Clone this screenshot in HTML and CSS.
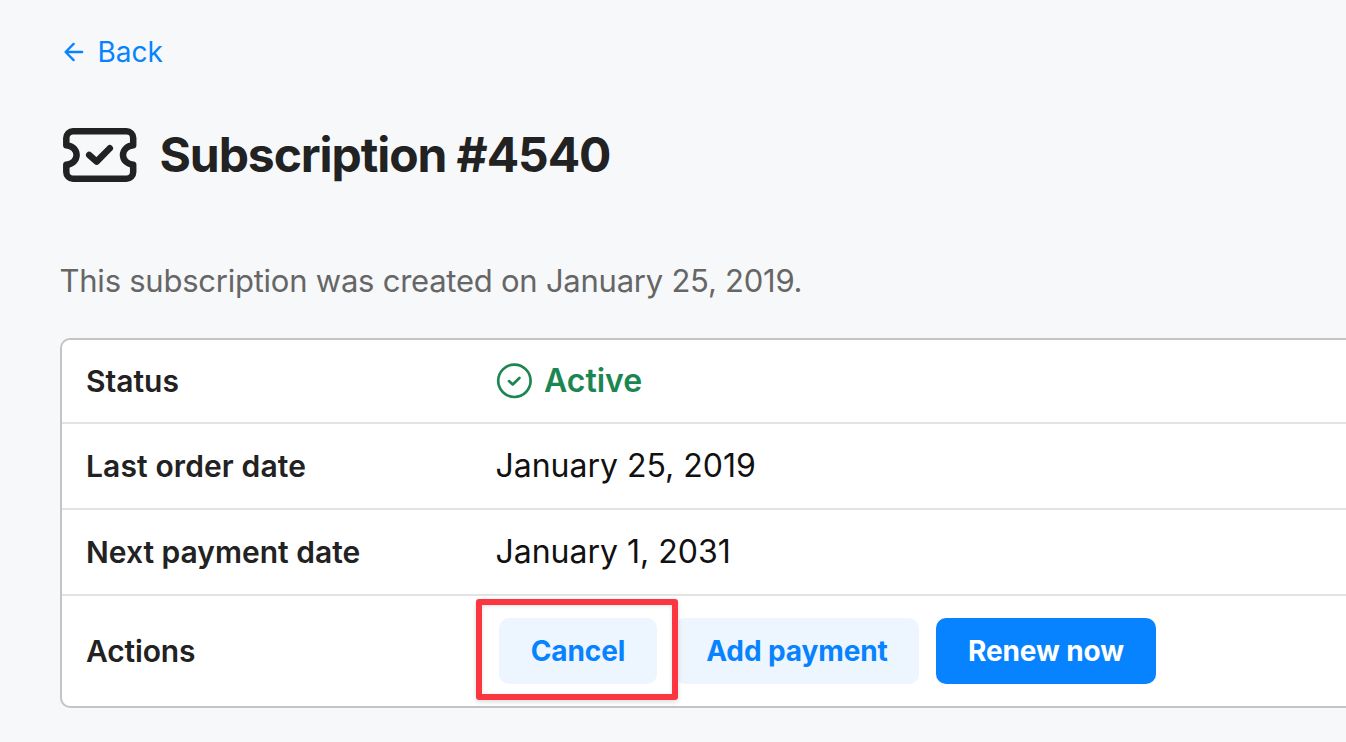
FILE: index.html
```
<!DOCTYPE html>
<html lang="en">
<head>
<meta charset="utf-8">
<title>Subscription #4540</title>
<link rel="stylesheet" href="styles.css">
</head>
<body>
<main class="page">
  <a class="back">
    <svg class="back-icon" viewBox="0 0 20 20"><path d="M18.2 10H2M9.6 1.9L1.6 10l8 8.1"/></svg>
    <span class="back-text">Back</span>
  </a>
  <header class="heading">
    <svg class="ticket" viewBox="0 0 74 54">
      <path class="ticket-outline" d="M10 3.3H63.5a6.7 6.7 0 0 1 6.7 6.7V17.2C64 17.8 60 22 60 27S64 36.2 70.2 36.8V44a6.7 6.7 0 0 1-6.7 6.7H10A6.7 6.7 0 0 1 3.3 44V36.8C9.5 36.2 13.6 32 13.6 27S9.5 17.8 3.3 17.2V10A6.7 6.7 0 0 1 10 3.3Z"/>
      <path class="ticket-check" d="M26.2 27L33.6 33.6L46.8 20.3"/>
    </svg>
    <h1 class="title">Subscription #4540</h1>
  </header>
  <p class="intro">This subscription was created on January 25, 2019.</p>
  <section class="card">
    <div class="row row-status">
      <div class="label">Status</div>
      <div class="value status">
        <svg class="status-icon" viewBox="0 0 36 36"><circle cx="18.4" cy="17.8" r="16.2"/><path d="M13 18.1L16.7 21.4L23.4 15"/></svg>
        <span class="status-text">Active</span>
      </div>
    </div>
    <div class="row"><div class="label label-last">Last order date</div><div class="value date">January 25, 2019</div></div>
    <div class="row"><div class="label label-next">Next payment date</div><div class="value date">January 1, 2031</div></div>
    <div class="row row-actions">
      <div class="label label-actions">Actions</div>
      <div class="actions">
        <button class="button cancel">Cancel</button>
        <button class="button payment">Add payment</button>
        <button class="button renew">Renew now</button>
        <div class="highlight"></div>
      </div>
    </div>
  </section>
</main>
</body>
</html>
```
FILE: styles.css
```
* { box-sizing: border-box; }
body {
  margin: 0;
  height: 742px;
  overflow: hidden;
  background: #f7f8fa;
  color: #222;
  font-family: Inter, "Liberation Sans", sans-serif;
}
.page { padding: 32px 0 0 60px; }
.back { display: flex; align-items: center; height: 40px; padding-left: 4px; gap: 13.4px; color: #0783ff; font-size: 28px; }
.back-icon { width: 20px; height: 20px; fill: none; stroke: currentColor; stroke-width: 2.3; stroke-linecap: round; stroke-linejoin: round; }
.heading { display: flex; align-items: center; height: 60px; margin-top: 53px; padding-left: 2.5px; gap: 23px; }
.ticket { width: 74px; height: 54px; overflow: visible; fill: none; stroke: #222; stroke-width: 6.5; stroke-linecap: round; stroke-linejoin: round; }
.title { margin: 0; font-size: 48px; line-height: 60px; font-weight: 700; letter-spacing: -1.08px; white-space: nowrap; }
.intro { margin: 76px 0 0 -.5px; font-size: 31px; line-height: 40px; letter-spacing: -.24px; color: #666; white-space: nowrap; }
.card { margin-top: 37px; border: 2px solid #c4c4c4; border-right: 0; border-radius: 10px 0 0 10px; background: #fff; }
.row { display: flex; align-items: center; height: 86px; padding-left: 24px; border-bottom: 2px solid #e3e3e3; }
.row-status { height: 84px; }
.row-actions { height: 110px; border-bottom: 0; }
.label { width: 410px; flex: none; font-size: 30px; font-weight: 600; }
.label-last { letter-spacing: .12px; }
.label-actions { letter-spacing: -.15px; }
.value { font-size: 32px; color: #111; white-space: nowrap; }
.date { margin-left: -.6px; padding-bottom: 1px; }
.status { display: flex; align-items: center; gap: 12px; color: #1b8651; font-weight: 600; }
.status-text { padding-bottom: 2px; }
.status-icon { width: 36px; height: 36px; fill: none; stroke: currentColor; stroke-width: 2.7; stroke-linecap: round; stroke-linejoin: round; }
.actions { position: relative; display: flex; padding-left: 3px; }
.button { height: 66px; padding: 0; border: 0; border-radius: 10px; background: #edf5ff; color: #0783ff; font-family: inherit; font-size: 28px; font-weight: 700; letter-spacing: -.1px; white-space: nowrap; }
.cancel { width: 158px; }
.payment { width: 244px; margin-left: 18px; }
.renew { width: 220px; margin-left: 17px; background: #0783ff; color: #fff; }
.highlight { position: absolute; left: -20px; top: -19px; width: 202px; height: 101px; border: 6px solid #fb3640; border-radius: 3px; box-shadow: 0 2px 5px rgba(0,0,0,.14), inset 0 1px 4px rgba(0,0,0,.12); }
```
